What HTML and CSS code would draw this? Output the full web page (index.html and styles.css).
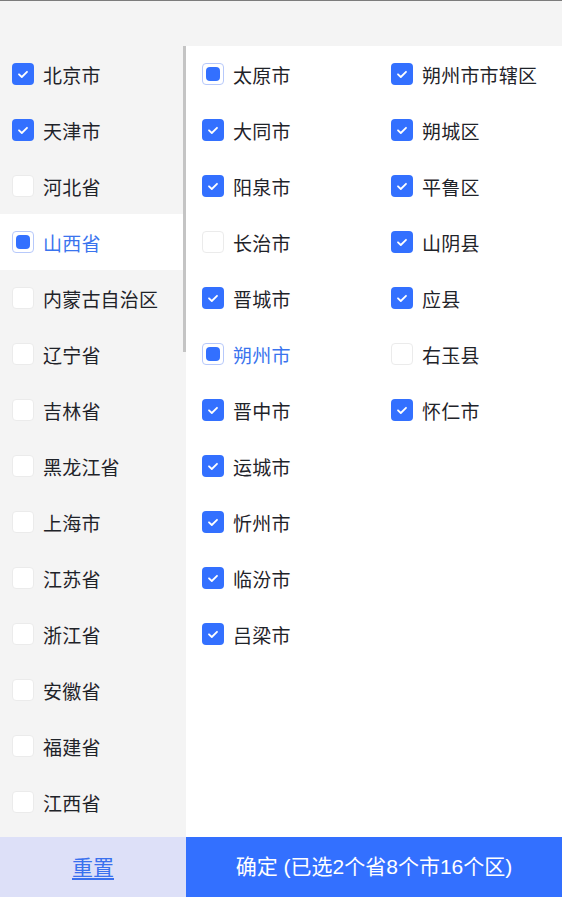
FILE: index.html
```html
<!DOCTYPE html>
<html lang="zh">
<head>
<meta charset="utf-8">
<title>地区选择</title>
<link rel="stylesheet" href="styles.css">
</head>
<body>
<div class="page">
  <div class="header"></div>
  <div class="main">
    <div class="left">
      <div class="row"><span class="cb checked"><svg viewBox="0 0 22 22" width="22" height="22"><path d="M7 11.3l2.8 2.7 5.2-5.2" fill="none" stroke="#fff" stroke-width="1.8" stroke-linecap="round" stroke-linejoin="round"/></svg></span><span class="label">北京市</span></div>
      <div class="row"><span class="cb checked"><svg viewBox="0 0 22 22" width="22" height="22"><path d="M7 11.3l2.8 2.7 5.2-5.2" fill="none" stroke="#fff" stroke-width="1.8" stroke-linecap="round" stroke-linejoin="round"/></svg></span><span class="label">天津市</span></div>
      <div class="row"><span class="cb"></span><span class="label">河北省</span></div>
      <div class="row active"><span class="cb half"><span class="dot"></span></span><span class="label">山西省</span></div>
      <div class="row"><span class="cb"></span><span class="label">内蒙古自治区</span></div>
      <div class="row"><span class="cb"></span><span class="label">辽宁省</span></div>
      <div class="row"><span class="cb"></span><span class="label">吉林省</span></div>
      <div class="row"><span class="cb"></span><span class="label">黑龙江省</span></div>
      <div class="row"><span class="cb"></span><span class="label">上海市</span></div>
      <div class="row"><span class="cb"></span><span class="label">江苏省</span></div>
      <div class="row"><span class="cb"></span><span class="label">浙江省</span></div>
      <div class="row"><span class="cb"></span><span class="label">安徽省</span></div>
      <div class="row"><span class="cb"></span><span class="label">福建省</span></div>
      <div class="row"><span class="cb"></span><span class="label">江西省</span></div>
      <div class="scrollbar"></div>
    </div>
    <div class="right">
      <div class="col">
        <div class="row"><span class="cb half"><span class="dot"></span></span><span class="label">太原市</span></div>
        <div class="row"><span class="cb checked"><svg viewBox="0 0 22 22" width="22" height="22"><path d="M7 11.3l2.8 2.7 5.2-5.2" fill="none" stroke="#fff" stroke-width="1.8" stroke-linecap="round" stroke-linejoin="round"/></svg></span><span class="label">大同市</span></div>
        <div class="row"><span class="cb checked"><svg viewBox="0 0 22 22" width="22" height="22"><path d="M7 11.3l2.8 2.7 5.2-5.2" fill="none" stroke="#fff" stroke-width="1.8" stroke-linecap="round" stroke-linejoin="round"/></svg></span><span class="label">阳泉市</span></div>
        <div class="row"><span class="cb"></span><span class="label">长治市</span></div>
        <div class="row"><span class="cb checked"><svg viewBox="0 0 22 22" width="22" height="22"><path d="M7 11.3l2.8 2.7 5.2-5.2" fill="none" stroke="#fff" stroke-width="1.8" stroke-linecap="round" stroke-linejoin="round"/></svg></span><span class="label">晋城市</span></div>
        <div class="row active"><span class="cb half"><span class="dot"></span></span><span class="label">朔州市</span></div>
        <div class="row"><span class="cb checked"><svg viewBox="0 0 22 22" width="22" height="22"><path d="M7 11.3l2.8 2.7 5.2-5.2" fill="none" stroke="#fff" stroke-width="1.8" stroke-linecap="round" stroke-linejoin="round"/></svg></span><span class="label">晋中市</span></div>
        <div class="row"><span class="cb checked"><svg viewBox="0 0 22 22" width="22" height="22"><path d="M7 11.3l2.8 2.7 5.2-5.2" fill="none" stroke="#fff" stroke-width="1.8" stroke-linecap="round" stroke-linejoin="round"/></svg></span><span class="label">运城市</span></div>
        <div class="row"><span class="cb checked"><svg viewBox="0 0 22 22" width="22" height="22"><path d="M7 11.3l2.8 2.7 5.2-5.2" fill="none" stroke="#fff" stroke-width="1.8" stroke-linecap="round" stroke-linejoin="round"/></svg></span><span class="label">忻州市</span></div>
        <div class="row"><span class="cb checked"><svg viewBox="0 0 22 22" width="22" height="22"><path d="M7 11.3l2.8 2.7 5.2-5.2" fill="none" stroke="#fff" stroke-width="1.8" stroke-linecap="round" stroke-linejoin="round"/></svg></span><span class="label">临汾市</span></div>
        <div class="row"><span class="cb checked"><svg viewBox="0 0 22 22" width="22" height="22"><path d="M7 11.3l2.8 2.7 5.2-5.2" fill="none" stroke="#fff" stroke-width="1.8" stroke-linecap="round" stroke-linejoin="round"/></svg></span><span class="label">吕梁市</span></div>
      </div>
      <div class="col">
        <div class="row"><span class="cb checked"><svg viewBox="0 0 22 22" width="22" height="22"><path d="M7 11.3l2.8 2.7 5.2-5.2" fill="none" stroke="#fff" stroke-width="1.8" stroke-linecap="round" stroke-linejoin="round"/></svg></span><span class="label">朔州市市辖区</span></div>
        <div class="row"><span class="cb checked"><svg viewBox="0 0 22 22" width="22" height="22"><path d="M7 11.3l2.8 2.7 5.2-5.2" fill="none" stroke="#fff" stroke-width="1.8" stroke-linecap="round" stroke-linejoin="round"/></svg></span><span class="label">朔城区</span></div>
        <div class="row"><span class="cb checked"><svg viewBox="0 0 22 22" width="22" height="22"><path d="M7 11.3l2.8 2.7 5.2-5.2" fill="none" stroke="#fff" stroke-width="1.8" stroke-linecap="round" stroke-linejoin="round"/></svg></span><span class="label">平鲁区</span></div>
        <div class="row"><span class="cb checked"><svg viewBox="0 0 22 22" width="22" height="22"><path d="M7 11.3l2.8 2.7 5.2-5.2" fill="none" stroke="#fff" stroke-width="1.8" stroke-linecap="round" stroke-linejoin="round"/></svg></span><span class="label">山阴县</span></div>
        <div class="row"><span class="cb checked"><svg viewBox="0 0 22 22" width="22" height="22"><path d="M7 11.3l2.8 2.7 5.2-5.2" fill="none" stroke="#fff" stroke-width="1.8" stroke-linecap="round" stroke-linejoin="round"/></svg></span><span class="label">应县</span></div>
        <div class="row"><span class="cb"></span><span class="label">右玉县</span></div>
        <div class="row"><span class="cb checked"><svg viewBox="0 0 22 22" width="22" height="22"><path d="M7 11.3l2.8 2.7 5.2-5.2" fill="none" stroke="#fff" stroke-width="1.8" stroke-linecap="round" stroke-linejoin="round"/></svg></span><span class="label">怀仁市</span></div>
      </div>
    </div>
  </div>
  <div class="footer">
    <a class="btn-reset">重置</a>
    <div class="btn-ok">确定 (已选2个省8个市16个区)</div>
  </div>
</div>
</body>
</html>
```

FILE: styles.css
```css
* { box-sizing: border-box; }
html, body {
  margin: 0;
  padding: 0;
  height: 100%;
}
body {
  background: #f4f4f4;
  font-family: "Noto Sans CJK SC", "Noto Sans", sans-serif;
  color: #1f2329;
  overflow: hidden;
}
.page {
  display: flex;
  flex-direction: column;
  height: 897px;
  border-top: 1px solid #7c7c7c;
}
.header {
  height: 45px;
  flex: none;
  background: #f4f4f4;
}
.main {
  flex: 1;
  display: flex;
  min-height: 0;
}
.left {
  width: 186px;
  flex: none;
  background: #f4f4f4;
  overflow: hidden;
  position: relative;
}
.scrollbar {
  position: absolute;
  top: 0;
  right: 0;
  width: 3px;
  height: 306px;
  background: #c4c4c4;
}
.right {
  flex: 1;
  background: #fff;
  display: flex;
}
.col {
  width: 189px;
  flex: none;
  padding-left: 4px;
}
.row {
  height: 56px;
  display: flex;
  align-items: center;
  padding-left: 12px;
  gap: 9px;
  font-size: 19px;
  line-height: 1;
}
.left .row.active {
  background: #fff;
}
.row.active .label {
  color: #3a74ee;
}
.label {
  white-space: nowrap;
  letter-spacing: 0.2px;
}
.cb {
  width: 22px;
  height: 22px;
  flex: none;
  border-radius: 4px;
  background: #fff;
  border: 1px solid #ebebeb;
  display: flex;
  align-items: center;
  justify-content: center;
}
.cb svg { display: block; }
.cb.checked {
  background: #3370ff;
  border: none;
}
.cb.half {
  border: 1px solid #b7c9fb;
}
.cb .dot {
  width: 14px;
  height: 14px;
  border-radius: 4px;
  background: #3370ff;
}
.footer {
  height: 60px;
  flex: none;
  display: flex;
  font-size: 21px;
  line-height: 1.2;
}
.btn-reset {
  width: 186px;
  background: #dde0f8;
  color: #3a70ee;
  text-decoration: underline;
  text-underline-offset: 3px;
  display: flex;
  align-items: center;
  justify-content: center;
}
.btn-ok {
  flex: 1;
  background: #3370ff;
  color: #fff;
  display: flex;
  align-items: center;
  justify-content: center;
  font-family: "Liberation Sans", "Noto Sans CJK SC", sans-serif;
}
```
